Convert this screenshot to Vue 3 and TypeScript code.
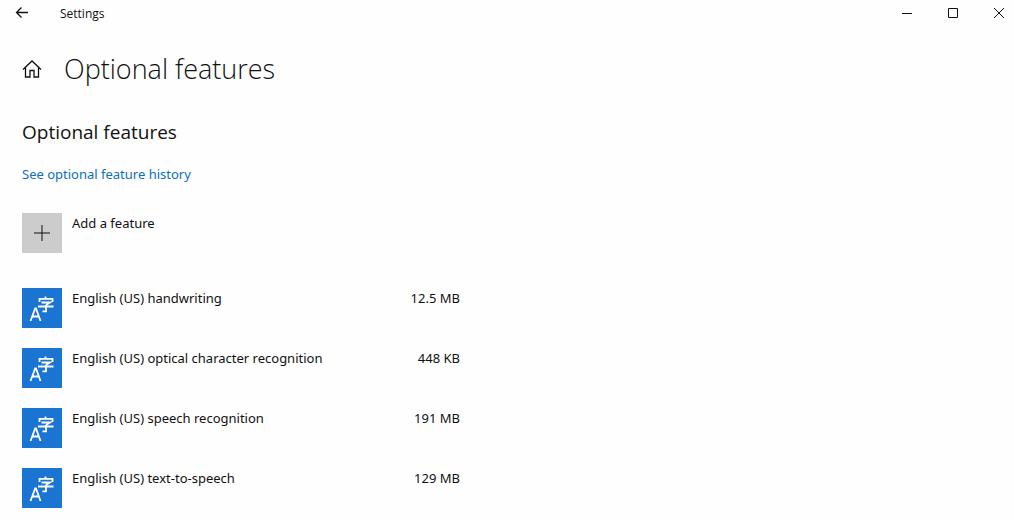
<script setup lang="ts">
interface Feature {
  name: string
  size: string
}

const features: Feature[] = [
  { name: 'English (US) handwriting', size: '12.5 MB' },
  { name: 'English (US) optical character recognition', size: '448 KB' },
  { name: 'English (US) speech recognition', size: '191 MB' },
  { name: 'English (US) text-to-speech', size: '129 MB' },
]
</script>

<template>
  <div class="window">
    <header class="titlebar">
      <button class="bar-button back" type="button" aria-label="Back">
        <svg width="14" height="12" viewBox="0 0 14 12">
          <path d="M13 5.500H1.500M6.500 .500L1.500 5.500l5 5" />
        </svg>
      </button>
      <span class="app-name">Settings</span>
      <button class="bar-button" type="button" aria-label="Minimize">
        <svg width="10" height="10" viewBox="0 0 10 10"><path d="M0 5.5h10" /></svg>
      </button>
      <button class="bar-button" type="button" aria-label="Maximize">
        <svg width="10" height="10" viewBox="0 0 10 10"><path d="M.5.5h9v9h-9z" /></svg>
      </button>
      <button class="bar-button close" type="button" aria-label="Close">
        <svg width="10" height="10" viewBox="0 0 10 10"><path d="M0 0l10 10M10 0L0 10" /></svg>
      </button>
    </header>

    <main class="content">
      <div class="page-head">
        <button class="home" type="button" aria-label="Home">
          <svg width="20" height="18" viewBox="0 0 20 18">
            <path d="M1 9.500L10 1l9 8.500M3.500 7.500v9.500H8v-6.500h4v6.500h4.500V7.500" />
          </svg>
        </button>
        <h1>Optional features</h1>
      </div>

      <h2>Optional features</h2>
      <a class="history" href="#">See optional feature history</a>

      <button class="row add" type="button">
        <span class="tile grey">
          <svg width="16" height="16" viewBox="0 0 16 16"><path d="M0 8h16M8 0v16" /></svg>
        </span>
        <span class="name">Add a feature</span>
      </button>

      <ul class="features">
        <li v-for="feature in features" :key="feature.name">
          <button class="row" type="button">
            <span class="tile blue">
              <svg class="language" width="40" height="40" viewBox="0 0 40 40" aria-hidden="true">
                <path d="M8.500 33L13.200 20.500h.8L18.500 33M10 28.500h7" />
                <path d="M23.500 8.500v2.500M17.500 14v-3.200h13V14M19.500 14.500h8.500l-4 2.500M16 18.500h15.500M24 17v6.300h-3.500" />
              </svg>
            </span>
            <span class="name">{{ feature.name }}</span>
            <span class="size">{{ feature.size }}</span>
          </button>
        </li>
      </ul>
    </main>
  </div>
</template>

<style>
body {
  margin: 0;
  background: #fefefe;
}
</style>

<style scoped>
.window {
  color: #111;
  font-family: 'Segoe UI', 'Noto Sans', 'Open Sans', sans-serif;
  font-size: 13px;
  line-height: 20px;
}

button {
  margin: 0;
  padding: 0;
  border: 0;
  background: none;
  color: inherit;
  font: inherit;
}

svg {
  display: block;
  fill: none;
  stroke: #111;
  stroke-width: 1;
}

.titlebar {
  display: flex;
  height: 26px;
}

.app-name {
  flex: 1;
  padding-left: 16px;
  font-family: 'Segoe UI', 'Open Sans', sans-serif;
  font-size: 12px;
  line-height: 28px;
}

.bar-button {
  display: flex;
  align-items: center;
  justify-content: center;
  width: 46px;
}

.back {
  width: 44px;
}

.close {
  justify-content: flex-start;
  width: 38px;
  padding-left: 18px;
}

.back svg,
.home svg {
  stroke-width: 1.3;
}

.content {
  padding: 23px 22px 12px;
}

.page-head {
  display: flex;
  align-items: center;
  gap: 22px;
}

h1,
h2 {
  margin: 0;
  color: #111;
  font-family: 'Segoe UI', 'Open Sans', sans-serif;
}

h1 {
  font-size: 27px;
  font-weight: 300;
  line-height: 40px;
}

h2 {
  margin-top: 29px;
  font-size: 19px;
  font-weight: 400;
  line-height: 28px;
}

.history {
  display: block;
  width: fit-content;
  margin-top: 18px;
  color: #0a70c0;
  text-decoration: none;
}

.row {
  display: flex;
  align-items: flex-start;
  gap: 10px;
  width: 100%;
  max-width: 438px;
  text-align: left;
}

.add {
  margin-top: 29px;
}

.tile {
  display: flex;
  flex: none;
  align-items: center;
  justify-content: center;
  width: 40px;
  height: 40px;
}

.grey {
  background: #ccc;
}

.blue {
  background: #1a74d2;
}

.language {
  stroke: #fff;
  stroke-width: 1.8;
}

.name {
  flex: 1;
}

.features {
  display: grid;
  gap: 20px;
  margin: 35px 0 0;
  padding: 0;
  list-style: none;
}
</style>
